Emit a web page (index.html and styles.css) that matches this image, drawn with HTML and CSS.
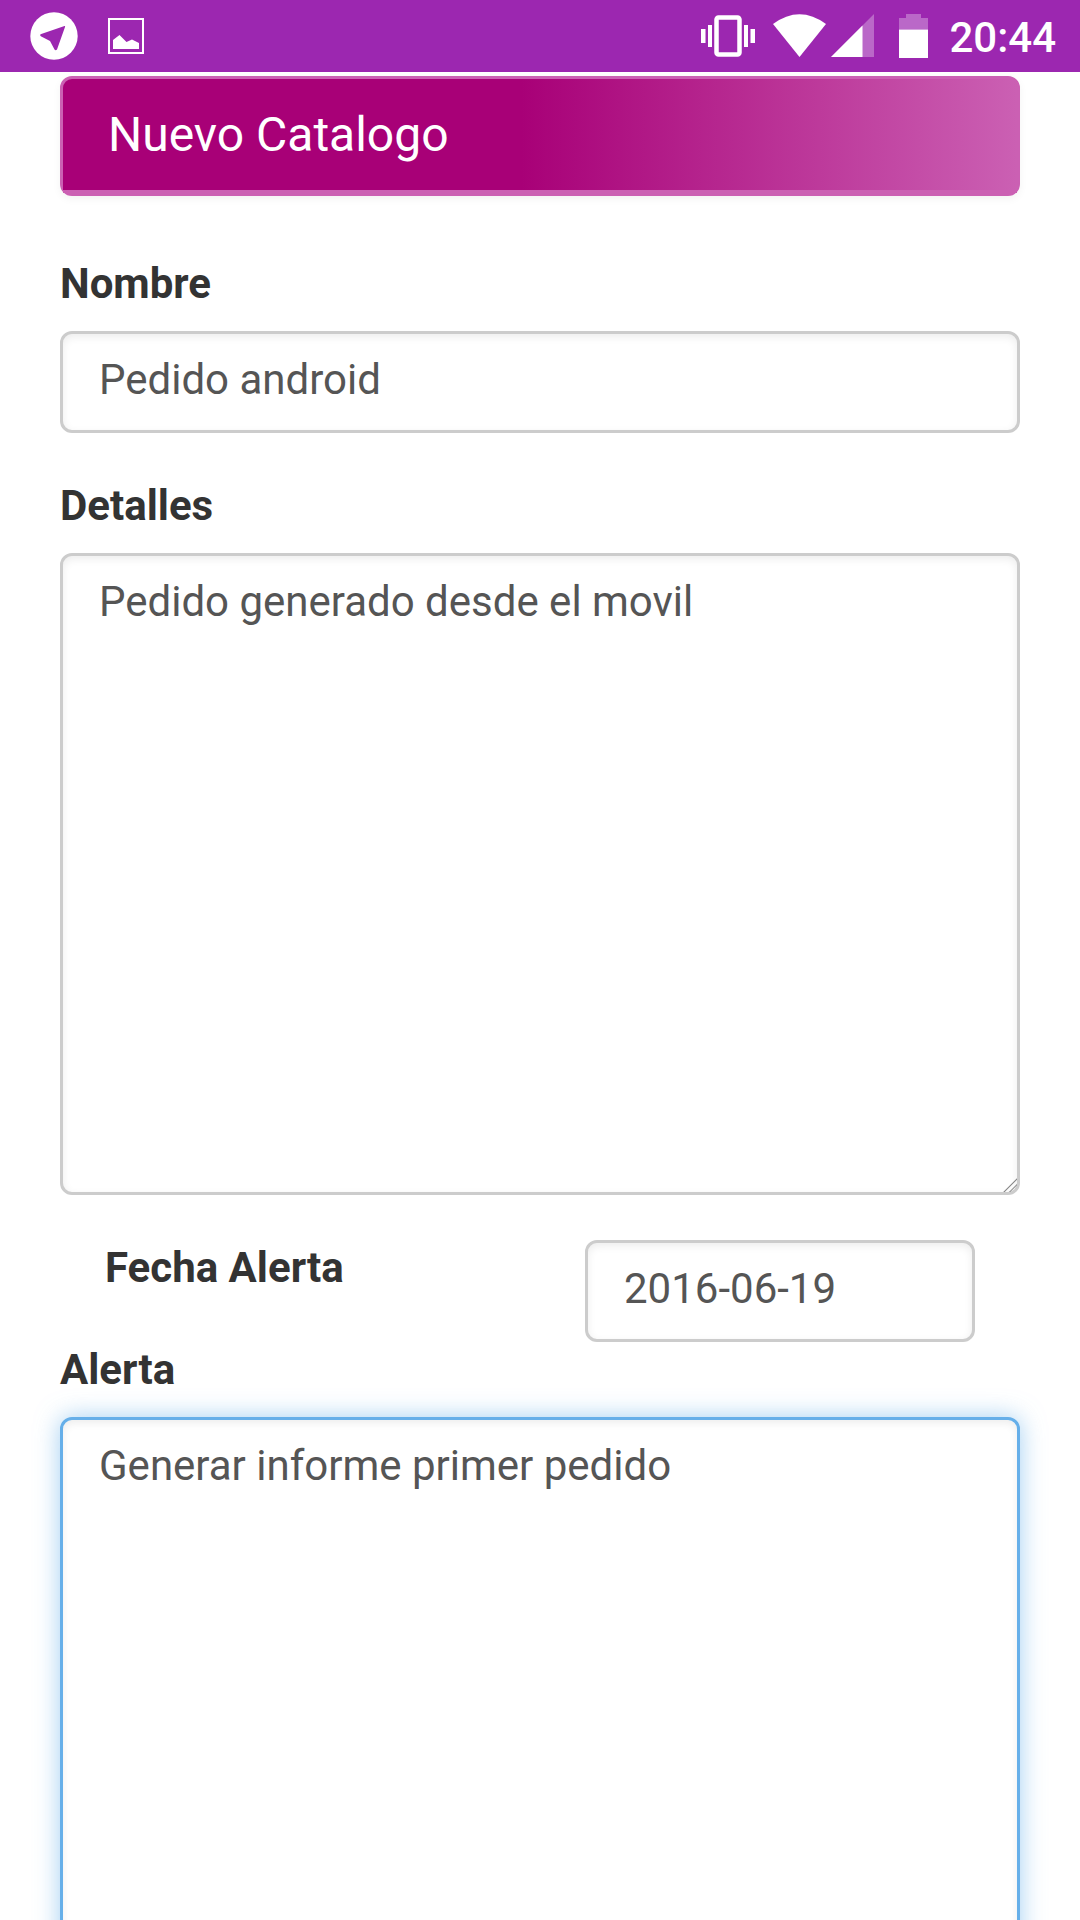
FILE: index.html
```html
<!DOCTYPE html>
<html lang="es">
<head>
  <meta charset="utf-8">
  <meta name="viewport" content="width=device-width, initial-scale=1">
  <title>Nuevo Catalogo</title>
  <link rel="stylesheet" href="styles.css">
</head>
<body>
  <header class="status-bar">
    <div class="status-group status-group-left">
      <svg class="icon" width="48" height="72" viewBox="30 0 48 72" aria-hidden="true">
        <circle cx="54" cy="36" r="23.700" fill="#fff"/>
        <path d="M40.5 34.2 64.5 26Q65.500 25.800 65 27L57 49.500Q55.500 51 54.500 49.500L50 41 40.800 36.200Q39.600 35 40.500 34.200Z" fill="#9c27b0"/>
      </svg>
      <svg class="icon" width="36" height="72" viewBox="108 0 36 72" aria-hidden="true">
        <rect x="109" y="19" width="34" height="34" fill="none" stroke="#fff" stroke-width="2"/>
        <path d="M113 40 119.500 35 126.500 42 132 39.500 139 43V49H113Z" fill="#fff"/>
      </svg>
    </div>
    <div class="status-group">
      <svg class="icon" width="72" height="72" viewBox="692 0 72 72" aria-hidden="true">
        <rect x="716.500" y="17.500" width="23" height="37" rx="2" fill="none" stroke="#fff" stroke-width="4.500"/>
        <path d="M701 29h4.500v14H701ZM708 25h4v22h-4ZM744 25h4v22h-4ZM750.500 29h4.500v14h-4.500Z" fill="#fff"/>
      </svg>
      <svg class="icon" width="66" height="72" viewBox="764 0 66 72" aria-hidden="true">
        <path d="M773 24Q799.500 4.500 826 24L799.500 57Z" fill="#fff"/>
      </svg>
      <svg class="icon" width="54" height="72" viewBox="830 0 54 72" aria-hidden="true">
        <path d="M831 57 874 14V57Z" fill="#fff" fill-opacity=".3"/>
        <path d="M831 57 862.500 25.500V57Z" fill="#fff"/>
      </svg>
      <svg class="icon" width="65" height="72" viewBox="884 0 65 72" aria-hidden="true">
        <path d="M899 29.500V18h7v-4h15v4h7v11.500Z" fill="#fff" fill-opacity=".3"/>
        <path d="M899 29.500h29V58h-29Z" fill="#fff"/>
      </svg>
      <time class="clock" datetime="20:44">20:44</time>
    </div>
  </header>

  <main class="content">
    <div class="panel">
      <h1 class="panel-title">Nuevo Catalogo</h1>
    </div>

    <form class="form">
      <div class="form-group">
        <label class="label" for="nombre">Nombre</label>
        <input class="field field-line" id="nombre" type="text" value="Pedido android">
      </div>
      <div class="form-group">
        <label class="label" for="detalles">Detalles</label>
        <textarea class="field field-area" id="detalles" rows="10">Pedido generado desde el movil</textarea>
      </div>
      <div class="form-row">
        <div class="form-col">
          <label class="label" for="fecha">Fecha Alerta</label>
        </div>
        <div class="form-col">
          <input class="field field-line" id="fecha" type="text" value="2016-06-19">
        </div>
      </div>
      <div class="form-group">
        <label class="label" for="alerta">Alerta</label>
        <textarea class="field field-area field-active" id="alerta" rows="10">Generar informe primer pedido</textarea>
      </div>
    </form>
  </main>
</body>
</html>
```

FILE: styles.css
```css
* {
  box-sizing: border-box;
}

body {
  display: flex;
  flex-direction: column;
  height: 100vh;
  margin: 0;
  overflow: hidden;
  background: #fff;
  color: #333;
  font-family: Roboto, sans-serif;
  font-size: 42px;
  line-height: 60px;
}

/* Status bar */
.status-bar {
  display: flex;
  flex: none;
  justify-content: space-between;
  padding: 0 24px 0 30px;
  background: #9c27b0;
  color: #fff;
}

.status-group {
  display: flex;
  align-items: center;
}

.status-group-left {
  gap: 30px;
}

.icon {
  display: block;
  flex: none;
}

.clock {
  padding-top: 4px;
  font-weight: 500;
}

/* Scrolling page */
.content {
  flex: 1;
  min-height: 0;
  padding: 4px 60px 0;
  overflow-y: auto;
  scrollbar-width: none;
}

.panel {
  margin-bottom: 60px;
  border: 3px solid #cb60b3;
  border-radius: 12px;
  background: #cb60b3;
  box-shadow: 0 3px 9px rgba(0, 0, 0, 0.05);
}

.panel-title {
  margin: 0;
  padding: 29px 45px;
  border-bottom: 3px solid #cb60b3;
  border-radius: 9px 9px 0 0;
  background: linear-gradient(to right, #a80077 48%, #cb60b3 100%);
  color: #fff;
  font-size: 48px;
  font-weight: 400;
  line-height: 53px;
}

/* Form */
.form {
  display: flex;
  flex-direction: column;
}

.form-group {
  margin-bottom: 45px;
}

.form-row {
  display: grid;
  grid-template-columns: 1fr 1fr;
}

.form-col {
  padding: 0 45px;
}

.label {
  display: block;
  margin-bottom: 19px;
  font-weight: 700;
  line-height: 56px;
}

.field {
  display: block;
  width: 100%;
  margin: 0;
  padding: 16px 36px 20px;
  border: 3px solid #ccc;
  border-radius: 12px;
  outline: 0;
  background: #fff;
  box-shadow: inset 0 3px 9px rgba(0, 0, 0, 0.075);
  color: #555;
  font: inherit;
}

.field-line {
  height: 102px;
  padding-bottom: 22px;
}

.field-area {
  overflow: auto;
  resize: vertical;
}

.field-area::-webkit-scrollbar {
  width: 15px;
  height: 15px;
}

.field-area::-webkit-resizer {
  background: linear-gradient(135deg, transparent 11px, #888 12px, transparent 13px, transparent 15px, #888 16px, transparent 17px);
}

.field:focus,
.field-active {
  border-color: #66afe9;
  box-shadow: inset 0 3px 9px rgba(0, 0, 0, 0.075), 0 0 24px rgba(102, 175, 233, 0.6);
}
```
